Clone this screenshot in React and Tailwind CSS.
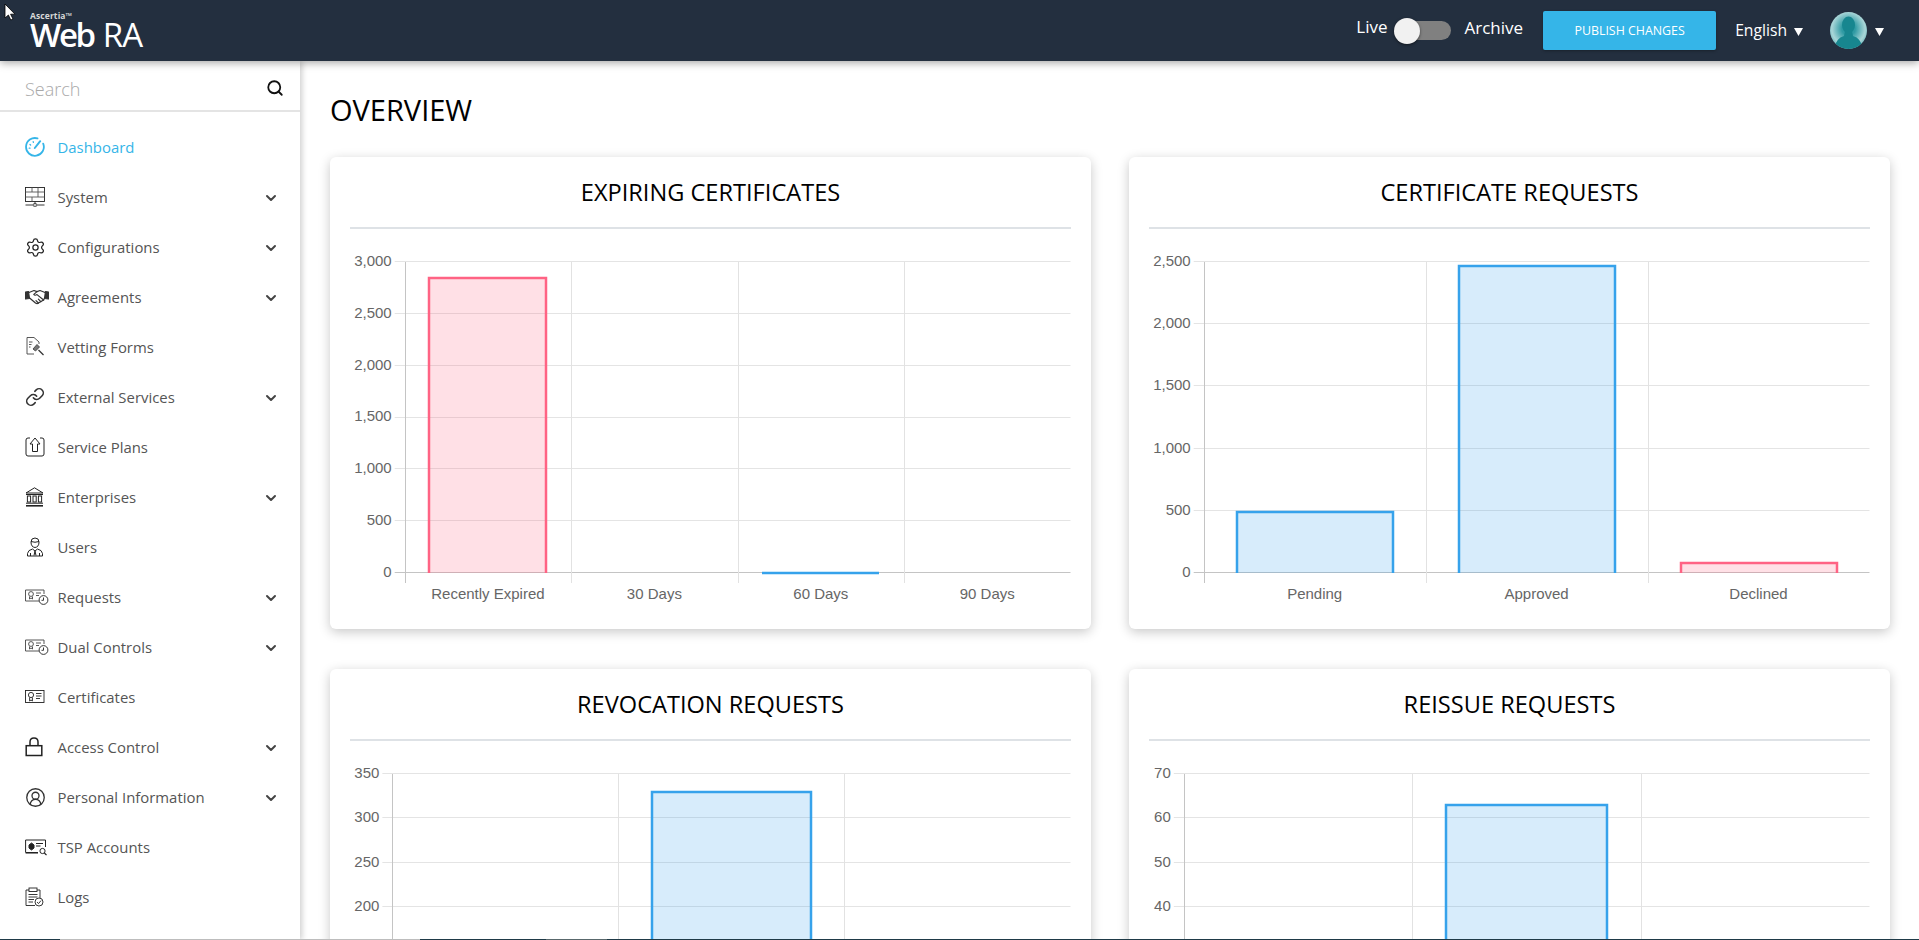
import { ChevronDown, CircleUserRound, Link, Search, Settings } from 'lucide-react';

const DashboardIcon = () => (
    <svg width="20" height="20" viewBox="0 0 20 20" fill="none" stroke="#35b5e8" strokeWidth="1.8" strokeLinecap="round">
        <path d="M12.5 1.4 A8.9 8.9 0 1 0 18.2 6.6" />
        <path d="M9.8 11 L15.2 4.2" strokeWidth="2" />
        <path d="M5 7.5 L5.6 8 M8.2 4.6 L8.4 5.4 M4.2 11.2 L5 11.2" strokeWidth="1.3" />
    </svg>
);

const SystemIcon = () => (
    <svg width="20" height="20" viewBox="0 0 20 20" fill="none" stroke="#222" strokeWidth="0.9">
        <rect x="0.5" y="0.5" width="19" height="14" />
        <path d="M0.5 5 H19.5 M0.5 10 H19.5 M7 0.5 V5 M13 5 V10 M7 10 V14.5 M13 0.5 V5" stroke="#555" />
        <path d="M10 14.5 V17 M0.5 18 H7.5 M12.5 18 H19.5" />
        <rect x="8" y="16.8" width="4" height="2.4" rx="1" />
    </svg>
);

const HandshakeIcon = () => (
    <svg width="24" height="20" viewBox="0 0 24 20" fill="none" stroke="#333" strokeWidth="1.2" strokeLinejoin="round" strokeLinecap="round">
        <path d="M0.5 5 L3.5 4.6 L4.5 11.5 L0.5 12 Z" fill="#333" />
        <path d="M23.5 5 L20.5 4.6 L19.5 11.5 L23.5 12 Z" fill="#333" />
        <path d="M4 5.5 L9 3.5 L12 4.6 L15 3.5 L20 5.5" />
        <path d="M12 4.6 L8.8 7.4 Q9.8 9 12 7.6 L18.6 13" />
        <path d="M4.6 11 L10.5 16 Q12.2 17.2 13.4 16 L18.6 13 L19.6 11" />
        <path d="M13.4 16 L11 13.6 M15.8 14.7 L13.4 12.2" />
    </svg>
);

const VettingIcon = () => (
    <svg width="20" height="20" viewBox="0 0 20 20" fill="none" stroke="#444" strokeWidth="0.9">
        <path d="M9 0.5 H2 V17 H9" />
        <path d="M9 0.5 L14 5 V7" />
        <path d="M4 5 H7.5 M4 7.5 H6.5 M4 10 H5.5" />
        <path d="M8 12 L12 7.5 L14.5 10 L10.5 14 Z" fill="#777" />
        <path d="M13.5 13 L18.5 18" strokeWidth="1.2" stroke="#333" />
    </svg>
);

const ServicePlansIcon = () => (
    <svg width="20" height="20" viewBox="0 0 20 20" fill="none" stroke="#222" strokeWidth="1">
        <path d="M5 1 H3 Q1 1 1 3 V17 Q1 19 3 19 H17 Q19 19 19 17 V3 Q19 1 17 1 H15" />
        <path d="M10 1 L15 7 H12.5 V14.5 H7.5 V7 H5 Z" />
    </svg>
);

const EnterprisesIcon = () => (
    <svg width="20" height="20" viewBox="0 0 20 20" fill="none" stroke="#222" strokeWidth="1">
        <path d="M1 6 L9.5 0.8 L18 6 Z" />
        <path d="M1 7.5 H18" />
        <rect x="2.4" y="9" width="3.2" height="6" />
        <rect x="8" y="9" width="3.2" height="6" />
        <rect x="13.4" y="9" width="3.2" height="6" />
        <path d="M1 16.2 H18" />
        <path d="M1 18.8 H18" strokeWidth="1.6" />
    </svg>
);

const UsersIcon = () => (
    <svg width="20" height="20" viewBox="0 0 20 20" fill="none" stroke="#222" strokeWidth="1">
        <path d="M6 5 Q6 1 10 1 Q14 1 14 5 Q14 10 10 10.5 Q6 10 6 5 Z" />
        <path d="M6 4.5 Q10 6 14 4.5" />
        <path d="M2.5 19 V16.5 Q3 13 7.5 12 L10 14 L12.5 12 Q17 13 17.5 16.5 V19 Z" />
        <path d="M10 14 L9 18.5 M10 14 L11 18.5 M5.5 16 V19 M14.5 16 V19" />
    </svg>
);

const RequestIcon = () => (
    <svg width="24" height="20" viewBox="0 0 24 20" fill="none" stroke="#444" strokeWidth="0.9">
        <path d="M16 14 H0.5 V3 H19 V7" />
        <circle cx="6" cy="7" r="2.4" />
        <path d="M4.5 9.5 V12 L6 11 L7.5 12 V9.5" />
        <path d="M11 6 H16 M11 8.5 H14" />
        <circle cx="18.5" cy="13" r="4.4" fill="#fff" stroke="#222" />
        <path d="M18.5 10.5 V13.3 H16.5" stroke="#222" />
    </svg>
);

const CertificateIcon = () => (
    <svg width="20" height="20" viewBox="0 0 20 20" fill="none" stroke="#222" strokeWidth="0.9">
        <rect x="0.5" y="3.5" width="18.5" height="12" />
        <circle cx="6" cy="8" r="2.6" />
        <path d="M4.6 10.5 V14 L6 13 L7.4 14 V10.5" />
        <path d="M11 6.5 H16.5 M11 9 H16.5 M11 11.5 H15" />
    </svg>
);

const LockIcon = () => (
    <svg width="20" height="20" viewBox="0 0 20 20" fill="none" stroke="#222" strokeWidth="1.5">
        <rect x="1.2" y="8.7" width="15.6" height="9.8" />
        <path d="M5 8.7 V5 Q5 1 9 1 Q13 1 13 5 V8.7" />
    </svg>
);

const TspIcon = () => (
    <svg width="24" height="20" viewBox="0 0 24 20" fill="none" stroke="#222" strokeWidth="1">
        <path d="M13 15.5 H0.6 V3 H20.5 V10" />
        <path d="M0.6 16.5 H13" stroke="#888" />
        <path d="M6.5 6 L9 8 V11 L6.5 13 L4 11 V8 Z" fill="#222" />
        <path d="M11 6.5 H18 M11 9 H15.5" />
        <circle cx="17.5" cy="14" r="2.6" fill="#fff" />
        <path d="M19.4 16 L21.5 18.2" strokeWidth="1.2" />
    </svg>
);

const LogsIcon = () => (
    <svg width="20" height="20" viewBox="0 0 20 20" fill="none" stroke="#222" strokeWidth="0.9">
        <path d="M10 18.5 H1 V3 H4 M12 3 H15 V11" />
        <rect x="4" y="1" width="8" height="3.5" />
        <path d="M3.5 7.5 H12.5 M3.5 10 H12.5 M3.5 12.5 H9 M3.5 15 H8" />
        <circle cx="14" cy="15" r="4" fill="#fff" />
        <path d="M12 15 L13.5 16.6 L16 13.6" />
    </svg>
);

const Caret = () => (
    <svg width="9" height="8" viewBox="0 0 9 8" className="shrink-0">
        <path d="M0 0 H9 L4.5 8 Z" fill="#fff" />
    </svg>
);

const navItems = [
    { label: 'Dashboard', icon: <DashboardIcon />, active: true },
    { label: 'System', icon: <SystemIcon />, more: true },
    { label: 'Configurations', icon: <Settings size={21} strokeWidth={1.4} color="#222" />, more: true },
    { label: 'Agreements', icon: <HandshakeIcon />, more: true },
    { label: 'Vetting Forms', icon: <VettingIcon /> },
    { label: 'External Services', icon: <Link size={20} strokeWidth={1.9} color="#333" />, more: true },
    { label: 'Service Plans', icon: <ServicePlansIcon /> },
    { label: 'Enterprises', icon: <EnterprisesIcon />, more: true },
    { label: 'Users', icon: <UsersIcon /> },
    { label: 'Requests', icon: <RequestIcon />, more: true },
    { label: 'Dual Controls', icon: <RequestIcon />, more: true },
    { label: 'Certificates', icon: <CertificateIcon /> },
    { label: 'Access Control', icon: <LockIcon />, more: true },
    { label: 'Personal Information', icon: <CircleUserRound size={21} strokeWidth={1.5} color="#333" />, more: true },
    { label: 'TSP Accounts', icon: <TspIcon /> },
    { label: 'Logs', icon: <LogsIcon /> },
];

const PINK = { stroke: 'rgb(255,99,132)', fill: 'rgba(255,99,132,0.2)' };
const BLUE = { stroke: 'rgb(54,162,235)', fill: 'rgba(54,162,235,0.2)' };

const charts = [
    {
        title: 'EXPIRING CERTIFICATES',
        axisX: 54.7,
        right: 720.5,
        ticks: ['3,000', '2,500', '2,000', '1,500', '1,000', '500', '0'],
        max: 3000,
        bars: [
            { label: 'Recently Expired', value: 2846, color: PINK },
            { label: '30 Days', value: 0, color: BLUE },
            { label: '60 Days', value: 4, color: BLUE },
            { label: '90 Days', value: 0, color: BLUE },
        ],
    },
    {
        title: 'CERTIFICATE REQUESTS',
        axisX: 54.7,
        right: 720.5,
        ticks: ['2,500', '2,000', '1,500', '1,000', '500', '0'],
        max: 2500,
        bars: [
            { label: 'Pending', value: 491, color: BLUE },
            { label: 'Approved', value: 2469, color: BLUE },
            { label: 'Declined', value: 80, color: PINK },
        ],
    },
    {
        title: 'REVOCATION REQUESTS',
        axisX: 42.4,
        right: 720.5,
        ticks: ['350', '300', '250', '200', '150', '100', '50', '0'],
        max: 350,
        bars: [
            { label: 'Pending', value: 0, color: BLUE },
            { label: 'Approved', value: 330, color: BLUE },
            { label: 'Declined', value: 0, color: PINK },
        ],
    },
    {
        title: 'REISSUE REQUESTS',
        axisX: 34.8,
        right: 720.5,
        ticks: ['70', '60', '50', '40', '30', '20', '10', '0'],
        max: 70,
        bars: [
            { label: 'Pending', value: 0, color: BLUE },
            { label: 'Approved', value: 63, color: BLUE },
            { label: 'Declined', value: 0, color: PINK },
        ],
    },
];

const PLOT_TOP = 33;
const PLOT_BOTTOM = 344;

const crisp = (n) => Math.round(n) - 0.5;

const BarChart = ({ axisX, right, ticks, max, bars }) => {
    const plotHeight = PLOT_BOTTOM - PLOT_TOP;
    const bandWidth = (right - axisX) / bars.length;
    const tickGap = plotHeight / (ticks.length - 1);

    return (
        <svg width="100%" height="380" className="block" style={{ fontFamily: '"Liberation Sans", Arial, sans-serif' }}>
            {ticks.map((tick, i) => {
                const y = PLOT_TOP + i * tickGap;
                const last = i === ticks.length - 1;
                return (
                    <g key={tick}>
                        <line x1={axisX - 10} x2={right} y1={crisp(y)} y2={crisp(y)} stroke={last ? '#c4c4c4' : '#e4e4e4'} strokeWidth="1" />
                        <text x={axisX - 13} y={y} textAnchor="end" dominantBaseline="middle" fontSize="15" fill="#666">
                            {tick}
                        </text>
                    </g>
                );
            })}
            {bars.map((bar, i) => {
                const x = axisX + i * bandWidth;
                const width = Math.round(bandWidth * 0.705);
                const barX = Math.round(x + (bandWidth - width) / 2);
                const barY = Math.round(PLOT_BOTTOM - (bar.value / max) * plotHeight);
                return (
                    <g key={bar.label}>
                        {bar.value > 0 && (
                            <>
                                <rect x={barX} y={barY} width={width} height={PLOT_BOTTOM - barY} fill={bar.color.fill} />
                                <path
                                    d={`M${barX} ${PLOT_BOTTOM} V${barY} H${barX + width} V${PLOT_BOTTOM}`}
                                    fill="none"
                                    stroke={bar.color.stroke}
                                    strokeWidth="2.5"
                                />
                            </>
                        )}
                        <text x={x + bandWidth / 2} y="366.5" textAnchor="middle" dominantBaseline="middle" fontSize="15" fill="#666">
                            {bar.label}
                        </text>
                    </g>
                );
            })}
            {[...bars, null].map((_, i) => {
                const x = crisp(axisX + i * bandWidth) + 1;
                return (
                    <line
                        key={i}
                        x1={x}
                        x2={x}
                        y1={PLOT_TOP}
                        y2={PLOT_BOTTOM + 10}
                        stroke={i === 0 ? '#c4c4c4' : '#e2e2e2'}
                        strokeWidth="1"
                    />
                );
            })}
        </svg>
    );
};

const Avatar = () => (
    <svg width="37" height="37" viewBox="0 0 37 37">
        <defs>
            <radialGradient id="avatarBg" cx="50%" cy="45%" r="60%">
                <stop offset="30%" stopColor="#2f9aa3" />
                <stop offset="75%" stopColor="#a9d6d8" />
                <stop offset="100%" stopColor="#5fb0b6" />
            </radialGradient>
            <clipPath id="avatarClip">
                <circle cx="18.5" cy="18.5" r="18.5" />
            </clipPath>
        </defs>
        <circle cx="18.5" cy="18.5" r="18.5" fill="url(#avatarBg)" />
        <g clipPath="url(#avatarClip)" fill="#17868f">
            <ellipse cx="18.5" cy="13" rx="6.5" ry="8.5" />
            <path d="M15 19 H22 L23 24 Q31 26 33 37 H4 Q6 26 14 24 Z" />
        </g>
    </svg>
);

const App = () => {
    return (
        <div
            className="relative flex h-screen flex-col overflow-hidden bg-white"
            style={{ fontFamily: '"Open Sans", "Noto Sans", sans-serif' }}
        >
            <header className="relative z-20 flex h-[61px] shrink-0 items-center bg-[#232f3f] pl-[30px] pr-[35px] text-white shadow-[0_2px_8px_rgba(0,0,0,0.35)]">
                <div className="mt-[-1px] flex flex-col">
                    <span className="text-[8.5px] font-bold leading-[10px] tracking-[0.1px] text-[#d8d8d8]">Ascertia™</span>
                    <span className="text-[33px] leading-[28px]">
                        <span className="font-semibold tracking-[-2.3px]">Web</span>
                        <span className="ml-[9px] font-normal tracking-[-1px]">RA</span>
                    </span>
                </div>

                <div className="ml-auto flex items-center">
                    <span className="mt-[-7px] text-[17px] leading-6">Live</span>
                    <div className="relative ml-[7px] h-[19px] w-[56px] rounded-full bg-[#808080]">
                        <span className="absolute left-[-1px] top-[-3px] h-[26px] w-[26px] rounded-full bg-[#f1f1f1] shadow-[0_1px_3px_rgba(0,0,0,0.5)]" />
                    </div>
                    <span className="ml-[14px] mt-[-6px] text-[17px] leading-6">Archive</span>
                    <button className="ml-5 h-[39px] w-[173px] rounded-[2px] bg-[#35b5e8] pt-px text-[12.4px] uppercase text-white shadow-[0_1px_3px_rgba(0,0,0,0.3)]">
                        Publish Changes
                    </button>
                    <span className="ml-[19px] mt-[-1px] text-[15.7px] leading-6">English</span>
                    <span className="ml-[7px] mt-[2px]">
                        <Caret />
                    </span>
                    <div className="ml-[27px]">
                        <Avatar />
                    </div>
                    <span className="ml-2 mt-[2px]">
                        <Caret />
                    </span>
                </div>
            </header>

            <div className="flex min-h-0 flex-1">
                <aside className="relative z-10 w-[300px] shrink-0 bg-white shadow-[2px_0_6px_rgba(0,0,0,0.2)]">
                    <div className="flex h-[51px] items-center border-b-2 border-[#e4e4e4] pl-[25px] pr-[16px]">
                        <input
                            placeholder="Search"
                            className="mt-[8px] min-w-0 flex-1 bg-transparent text-[18px] font-light outline-none placeholder:text-[#a9a9a9]"
                        />
                        <Search size={18} strokeWidth={2.4} color="#111" className="mt-[4px]" />
                    </div>
                    <nav className="pt-[10px]">
                        {navItems.map(item => (
                            <div key={item.label} className="flex h-[50px] items-center pl-[25px] pr-[21px]">
                                <span className="flex w-[32.5px] shrink-0 items-center">{item.icon}</span>
                                <span className={`flex-1 text-[14.9px] ${item.active ? 'text-[#35b5e8]' : 'text-[#555]'}`}>
                                    {item.label}
                                </span>
                                {item.more && <ChevronDown size={16} strokeWidth={3} color="#444" className="mt-[2px]" />}
                            </div>
                        ))}
                    </nav>
                </aside>

                <main className="min-w-0 flex-1 overflow-hidden pl-[30px] pr-[29px]">
                    <h1 className="mb-[27px] mt-[29px] text-[29px] leading-[40px] text-black">OVERVIEW</h1>
                    <div className="grid grid-cols-2 gap-x-[38px] gap-y-[40px]">
                        {charts.map(chart => (
                            <section
                                key={chart.title}
                                className="h-[472px] overflow-hidden rounded-md bg-white px-5 pt-5 shadow-[0_3px_12px_rgba(0,0,0,0.22)]"
                            >
                                <h2 className="mt-[-1px] border-b-2 border-[#dee2e6] pb-[19px] text-center text-[23.6px] leading-8 text-black">
                                    {chart.title}
                                </h2>
                                <BarChart {...chart} />
                            </section>
                        ))}
                    </div>
                </main>
            </div>

            {/* strip of the next window peeking in at the very bottom */}
            <div className="absolute inset-x-0 bottom-0 z-30 flex h-px bg-[#1f3a47]">
                <span className="ml-[60px] w-[360px] bg-[#bdbdbd]" />
                <span className="ml-[126px] w-[61px] bg-[#59686c]" />
            </div>

            {/* mouse pointer */}
            <svg width="12" height="18" viewBox="0 0 12 18" className="absolute left-[4px] top-[3px] z-40">
                <path d="M1 1 V15 L4.4 12 L6.8 17 L9 16 L6.6 11.2 H11 Z" fill="#fff" stroke="#000" strokeWidth="0.8" />
            </svg>
        </div>
    );
};

export default App;
